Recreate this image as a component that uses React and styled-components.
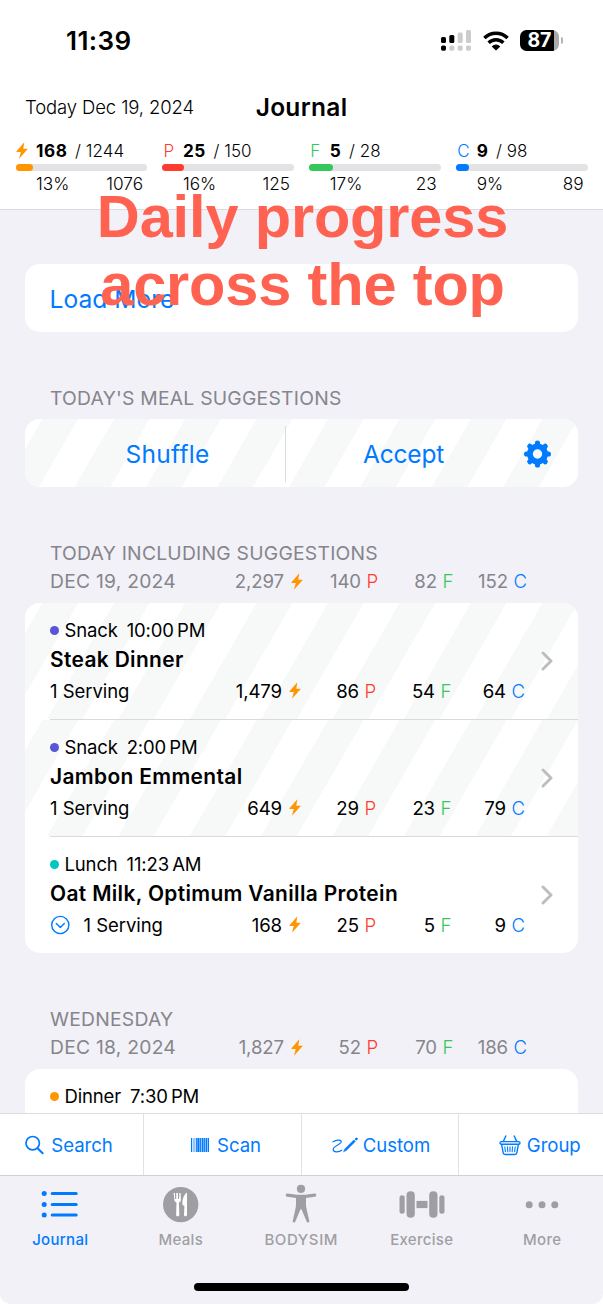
import React from "react";
import styled, { createGlobalStyle } from "styled-components";

const C = {
  blue: "#007aff",
  orange: "#ff9500",
  red: "#ff3b30",
  green: "#34c759",
  indigo: "#5856d6",
  teal: "#00c7be",
  grey: "#85858b",
  tab: "#9f9fa3",
  line: "#dcdce0",
  bg: "#f2f1f8",
};

const GlobalStyle = createGlobalStyle`
  * { box-sizing: border-box; }
  body {
    margin: 0;
    background: #fff;
    font-family: Inter, "Liberation Sans", sans-serif;
    color: #000;
  }
  svg { display: block; flex: none; }
`;

const Page = styled.div`
  position: relative;
  display: flex;
  flex-direction: column;
  width: 603px;
  height: 1304px;
  overflow: hidden;
  background: ${C.bg};
  border-radius: 0 0 10px 10px;
`;

/* ---------- header ---------- */

const Header = styled.header`
  flex: none;
  height: 210px;
  background: #fff;
  border-bottom: 1px solid ${C.line};
`;

const StatusBar = styled.div`
  display: flex;
  align-items: center;
  height: 81px;
  padding: 0 40px 0 66px;
`;

const Clock = styled.div`
  flex: 1;
  font-size: 26px;
  font-weight: 600;
  letter-spacing: 0.4px;
`;

const StatusIcons = styled.div`
  display: flex;
  align-items: center;
  gap: 11.5px;
`;

const Battery = styled.div`
  display: flex;
  align-items: center;
  gap: 2.5px;
  &::after {
    content: "";
    width: 2px;
    height: 7px;
    border-radius: 0 2px 2px 0;
    background: #b3b3b3;
  }
`;

const BatteryBody = styled.div`
  width: 38.5px;
  height: 21.5px;
  border-radius: 6.5px;
  background: linear-gradient(90deg, #000 87%, #aaa 87%);
  color: #fff;
  font-size: 19.5px;
  font-weight: 700;
  line-height: 21.5px;
  text-align: center;
  letter-spacing: -0.2px;
`;

const TitleRow = styled.div`
  display: grid;
  grid-template-columns: 1fr auto 1fr;
  align-items: center;
  height: 52px;
  padding: 0 25px;
`;

const Today = styled.div`
  font-size: 18.5px;
  font-weight: 300;
  letter-spacing: -0.12px;
`;

const Title = styled.h1`
  margin: 0;
  font-size: 24.5px;
  font-weight: 600;
  letter-spacing: 0.31px;
`;

const Stats = styled.div`
  display: grid;
  grid-template-columns: repeat(4, 131.5px);
  gap: 15.4px;
  padding: 5px 0 0 15.5px;
`;

const StatTop = styled.div`
  display: grid;
  grid-template-columns: 20.5px auto 1fr;
  align-items: center;
  height: 25px;
  margin-bottom: 1px;
  font-size: 17px;
`;

const StatUnit = styled.div`
  padding-left: ${(p) => (p.$icon ? 0.8 : 1)}px;
  color: ${(p) => p.$color};
  font-weight: 300;
`;

const StatValue = styled.b`
  font-size: 17.2px;
  font-weight: 700;
  letter-spacing: 0.55px;
`;

const StatGoal = styled.span`
  padding-left: 7.6px;
  font-weight: 300;
  letter-spacing: 0.05px;
`;

const Track = styled.div`
  height: 6.5px;
  border-radius: 4px;
  background: #e3e3e5;
`;

const Fill = styled.div`
  height: 100%;
  border-radius: 4px;
  background: ${(p) => p.$color};
`;

const StatBottom = styled.div`
  display: flex;
  align-items: center;
  justify-content: space-between;
  height: 26px;
  padding: 0 4px 0 20.5px;
  font-size: 17.2px;
  font-weight: 300;
`;

/* ---------- content ---------- */

const Main = styled.main`
  flex: none;
  height: 903px;
  padding: 54px 25px 0;
  overflow: hidden;
`;

const Card = styled.section`
  border-radius: 15px;
  background: #fff;
  overflow: hidden;
`;

const stripes = `repeating-linear-gradient(
  120deg,
  #f7f9f9 0,
  #f7f9f9 30.9px,
  #fff 30.9px,
  #fff 61.85px
)`;

const Striped = styled.div`
  position: relative;
  overflow: hidden;
  isolation: isolate;
  &::before {
    content: "";
    position: absolute;
    z-index: -1;
    inset: 0 0 0 -54.1px;
    display: ${(p) => (p.$on ? "block" : "none")};
    background: ${stripes};
  }
`;

const LoadMore = styled.div`
  height: 68px;
  padding-left: 24.5px;
  line-height: 70px;
  font-size: 24.6px;
  color: ${C.blue};
`;

const Suggest = styled(Striped)`
  display: flex;
  align-items: center;
  height: 68px;
  padding: 1px 26px 0 25px;
`;

const SuggestAction = styled.div`
  flex: 1;
  text-align: center;
  font-size: 24.5px;
  line-height: 34px;
  padding: 1px ${(p) => p.$inset || 0}px 0 0;
  letter-spacing: ${(p) => p.$spacing}px;
  color: ${C.blue};
`;

const VLine = styled.div`
  width: 1px;
  height: 56px;
  background: ${C.line};
`;

const SectionHeader = styled.div`
  padding: 51.5px 51px 6.5px 25px;
  line-height: 29px;
  font-size: 19.3px;
  letter-spacing: 0.24px;
  color: ${C.grey};
`;

const SectionTotals = styled.div`
  display: flex;
  justify-content: space-between;
  align-items: center;
  height: 29px;
  padding-bottom: 1px;
`;

const Row = styled(Striped)`
  display: flex;
  align-items: center;
  height: 116px;
  padding: 0 25px 0 25px;
`;

const RowBody = styled.div`
  width: 475px;
  margin-right: 16px;
  padding-top: 2px;
`;

const Divider = styled.div`
  height: 1px;
  background: linear-gradient(90deg, transparent 25px, #dadadd 25px);
`;

const When = styled.div`
  display: flex;
  align-items: center;
  height: 29px;
  padding-bottom: 1px;
  font-size: 18.5px;
  letter-spacing: -0.15px;
`;

const Dot = styled.i`
  width: 9.5px;
  height: 9.5px;
  margin: 1px 5.5px 0 -0.5px;
  border-radius: 50%;
  background: ${(p) => p.$color};
`;

const Time = styled.span`
  padding-left: 9px;
`;

const Name = styled.div`
  line-height: 30px;
  font-size: 20.9px;
  font-weight: 600;
  letter-spacing: 0.36px;
  white-space: nowrap;
`;

const Details = styled.div`
  display: flex;
  align-items: center;
  justify-content: space-between;
  height: 33px;
  padding-bottom: 1.5px;
`;

const Serving = styled.div`
  display: flex;
  align-items: center;
  gap: 13.5px;
  font-size: 18.5px;
  letter-spacing: -0.05px;
`;

const MetricRow = styled.div`
  display: grid;
  grid-template-columns: 77px 77px 76px 71px;
  font-size: 18.6px;
  letter-spacing: -0.1px;
`;

const Metric = styled.div`
  display: grid;
  grid-template-columns: 1fr 14px;
  column-gap: 5px;
  align-items: center;
  text-align: right;
`;

const Unit = styled.span`
  padding-left: ${(p) => (p.$icon ? 2 : 0.6)}px;
  text-align: left;
  font-weight: 300;
  color: ${(p) => p.$color};
`;

/* ---------- bottom bars ---------- */

const Toolbar = styled.nav`
  flex: none;
  display: grid;
  grid-template-columns: 151.5px 157.5px 157.5px 159px;
  height: 62px;
  margin-left: -7.5px;
  border-top: 1px solid ${C.line};
  background: #fff;
`;

const Tool = styled.div`
  display: flex;
  align-items: center;
  justify-content: center;
  gap: ${(p) => p.$gap}px;
  padding: 1px 0 0 ${(p) => p.$shift || 0}px;
  border-right: 1.5px solid #e2e1e8;
  font-size: 18.6px;
  letter-spacing: -0.05px;
  color: ${C.blue};
  &:last-child { border: 0; }
`;

const TabBar = styled.nav`
  flex: none;
  display: grid;
  grid-template-columns: repeat(5, 1fr);
  height: 108px;
  padding: 8px 0.5px 0 0;
  border-top: 1px solid #cfcfd4;
`;

const Tab = styled.div`
  display: flex;
  flex-direction: column;
  align-items: center;
  line-height: 30px;
  font-size: 15px;
  font-weight: 500;
  letter-spacing: ${(p) => p.$spacing || 0.3}px;
  color: ${(p) => (p.$active ? C.blue : C.tab)};
`;

const HomeIndicator = styled.div`
  width: 214.5px;
  height: 8px;
  margin: 0 auto;
  border-radius: 4px;
  background: #000;
`;

const Caption = styled.div`
  position: absolute;
  top: 182.5px;
  left: 0;
  width: 605px;
  text-align: center;
  font: 700 59.5px/68px "Liberation Sans", Arial, sans-serif;
  letter-spacing: -0.15px;
  color: #ff6250;
`;

/* ---------- icons ---------- */

const Bolt = () => (
  <svg width="12" height="17" viewBox="0 0 12 17">
    <path d="M8.3.2.5 9.3c-.2.3 0 .6.3.6h4L3 16.8l8.5-9.5c.3-.3.1-.6-.3-.6H7.3Z" fill={C.orange} />
  </svg>
);

const Signal = () => (
  <svg width="30" height="21" viewBox="0 0 30 21">
    {[
      [0, 7, 6, "#000", "#000"],
      [8.3, 5, 8, "#000", "#ccc"],
      [16.7, 2.5, 10.5, "#ccc", "#ccc"],
      [25, 0, 13, "#ccc", "#ccc"],
    ].map(([x, y, h, a, b]) => (
      <g key={x}>
        <rect x={x} y={y} width="5" height={h} rx="1.5" fill={a} />
        <rect x={x} y="15.5" width="5" height="5.3" rx="1.7" fill={b} />
      </g>
    ))}
  </svg>
);

const Wifi = () => (
  <svg width="26" height="20" viewBox="0 0 26 20">
    <g fill="none" stroke="#000" strokeWidth="3.5">
      <path d="M1.4 7.1a16.6 16.6 0 0 1 23.2 0" />
      <path d="M5.6 11.7a10.6 10.6 0 0 1 14.8 0" />
    </g>
    <path d="M13 19.6 8.7 15.4a6 6 0 0 1 8.6 0Z" fill="#000" />
  </svg>
);

const Gear = () => (
  <svg width="29" height="28" viewBox="-14 -14 28 28">
    <g stroke={C.blue} strokeWidth="5.2" strokeLinecap="round">
      {[0, 45, 90, 135].map((a) => (
        <path key={a} d="M0-10.9V-8M0 10.9V8" transform={`rotate(${a})`} />
      ))}
    </g>
    <circle r="7.6" fill="none" stroke={C.blue} strokeWidth="5.8" />
  </svg>
);

const Chevron = () => (
  <svg width="12" height="20" viewBox="0 0 12 20">
    <path d="m2 2 8 8-8 8" fill="none" stroke="#bdbdbf" strokeWidth="2.9" strokeLinecap="round" strokeLinejoin="round" />
  </svg>
);

const CircleChevron = () => (
  <svg width="20" height="20" viewBox="0 0 20 20">
    <g fill="none" stroke={C.blue} strokeWidth="1.4" strokeLinecap="round" strokeLinejoin="round">
      <circle cx="10.3" cy="10" r="8.6" />
      <path d="m6.3 8.5 4 4 4-4" />
    </g>
  </svg>
);

const SearchIcon = () => (
  <svg width="19" height="20" viewBox="0 0 19 20">
    <g fill="none" stroke={C.blue} strokeWidth="1.7" strokeLinecap="round">
      <circle cx="7.7" cy="8.2" r="6.7" />
      <path d="m12.6 13.2 5 5" strokeWidth="2" />
    </g>
  </svg>
);

const Barcode = () => (
  <svg width="18" height="14" viewBox="0 0 18 14">
    <g fill={C.blue}>
      {[[0, 1.2], [2.6, 0.8], [4.8, 1], [6.4, 2], [9.1, 1], [10.9, 1.5], [13.1, 1], [14.8, 1.2], [16.8, 1.2]].map(([x, w]) => (
        <rect key={x} x={x} width={w} height="14" />
      ))}
    </g>
    <rect x="4.8" width="13.2" height="14" fill={C.blue} opacity="0.3" />
  </svg>
);

const Scribble = () => (
  <svg width="26" height="19" viewBox="0 0 26 19">
    <path
      d="M1 5.8C4 3.8 9.2 3.2 9.2 5.6 9.2 8.8 1.2 9.8 1.2 13.4c0 3.3 5.7 2.8 8.6.9"
      fill="none" stroke={C.blue} strokeWidth="1.2" strokeLinecap="round"
    />
    <path d="m11.6 15.7 1.4-2.9L21.8 4l1.5 1.5-8.9 8.8Z" fill={C.blue} stroke={C.blue} strokeWidth=".6" strokeLinejoin="round" />
    <path d="m24.2 3.1.3-.3" stroke={C.blue} strokeWidth="2.6" strokeLinecap="round" />
  </svg>
);

const Basket = () => (
  <svg width="22" height="21" viewBox="0 0 22 21">
    <g fill="none" stroke={C.blue} strokeWidth="1.4" strokeLinecap="round" strokeLinejoin="round">
      <path d="M6.8 1 4.3 6.4M15.2 1l2.5 5.4" />
      <rect x="1" y="6.6" width="20" height="2.6" rx="1.3" />
      <path d="m2.6 9.4 1.5 8.2c.2 1.3.9 1.9 2.1 1.9h9.6c1.2 0 1.9-.6 2.1-1.9l1.5-8.2" />
      <path d="m5.8 11.8.6 4.8M8.5 11.8l.3 4.8M11 11.8v4.8M13.5 11.8l-.3 4.8M16.2 11.8l-.6 4.8" strokeWidth="1.1" />
    </g>
  </svg>
);

const ListIcon = () => (
  <svg width="38" height="41" viewBox="0 0 38 41">
    {[9.6, 20.4, 31].map((y) => (
      <g key={y}>
        <circle cx="3.2" cy={y} r="2.5" fill={C.blue} />
        <path d={`M11.2 ${y}H35.2`} stroke={C.blue} strokeWidth="3" strokeLinecap="round" />
      </g>
    ))}
  </svg>
);

const MealsIcon = () => (
  <svg width="36" height="41" viewBox="0 0 36 41">
    <circle cx="17.7" cy="20.6" r="17.7" fill={C.tab} />
    <path
      d="M10.6 9h1.3l.3 6h1l.1-6h1.7l.1 6h1l.3-6h1.2l.3 6.8c0 1.4-.8 2.2-2 2.6l.4 12.4c0 2-3.2 2-3.2 0l.4-12.4c-1.3-.4-2.2-1.2-2.1-2.6Z"
      fill="#fff"
    />
    <path d="M24 9.3v21.6c0 1.9-3 1.9-3 0l.4-8.9c-1.6-.9-2.1-1.7-2.1-3.1 0-4 1.9-8 4-10.1.4-.3.7-.1.7.5Z" fill="#fff" />
  </svg>
);

const BodyIcon = () => (
  <svg width="32" height="41" viewBox="0 0 32 41">
    <g fill={C.tab} stroke={C.tab} strokeLinecap="round" strokeLinejoin="round">
      <circle cx="16" cy="4.9" r="4.1" stroke="none" />
      <path d="M2.3 11.2 11.5 12.3h9l9.2-1.1" fill="none" strokeWidth="3.2" />
      <path d="M11.8 12h8.4v8.5c0 2.3.4 4.3 1 6.4l2.4 10.6-1 .2L17.2 25c-.4-.9-2-.9-2.4 0L9.4 37.7l-1-.2 2.4-10.6c.6-2.1 1-4.1 1-6.4Z" strokeWidth="1.6" />
    </g>
  </svg>
);

const Dumbbell = () => (
  <svg width="46" height="41" viewBox="0 0 46 41">
    <g fill={C.tab}>
      <rect x=".5" y="11.2" width="5.2" height="18.5" rx="2.5" />
      <rect x="7.5" y="7.2" width="8.3" height="26.5" rx="4" />
      <rect x="17.5" y="16.9" width="11" height="7.2" />
      <rect x="30.2" y="7.2" width="8.3" height="26.5" rx="4" />
      <rect x="40.3" y="11.2" width="5.2" height="18.5" rx="2.5" />
    </g>
  </svg>
);

const Dots = () => (
  <svg width="36" height="41" viewBox="0 0 36 41">
    {[5.2, 18, 30.8].map((x) => (
      <circle key={x} cx={x} cy="20.8" r="3.5" fill={C.tab} />
    ))}
  </svg>
);

/* ---------- data ---------- */

const stats = [
  { value: 168, goal: 1244, pct: "13%", left: 1076, color: C.orange, fill: 17 },
  { unit: "P", value: 25, goal: 150, pct: "16%", left: 125, color: C.red, fill: 22 },
  { unit: "F", value: 5, goal: 28, pct: "17%", left: 23, color: C.green, fill: 23.5 },
  { unit: "C", value: 9, goal: 98, pct: "9%", left: 89, color: C.blue, fill: 12.8 },
];

const meals = [
  { meal: "Snack", time: "10:00\u2009PM", color: C.indigo, name: "Steak Dinner", m: ["1,479", 86, 54, 64], suggested: true },
  { meal: "Snack", time: "2:00\u2009PM", color: C.indigo, name: "Jambon Emmental", m: ["649", 29, 23, 79], suggested: true },
  { meal: "Lunch", time: "11:23\u2009AM", color: C.teal, name: "Oat Milk, Optimum Vanilla Protein", m: ["168", 25, 5, 9] },
];

const units = [[<Bolt key="b" />, C.orange], ["P", C.red], ["F", C.green], ["C", C.blue]];

const Metrics = ({ values }) => (
  <MetricRow>
    {values.map((v, i) => (
      <Metric key={i}>
        <span>{v}</span>
        <Unit $icon={i === 0} $color={units[i][1]}>{units[i][0]}</Unit>
      </Metric>
    ))}
  </MetricRow>
);

const MealTime = ({ meal, time, color }) => (
  <When>
    <Dot $color={color} />
    <span>{meal}</span>
    <Time>{time}</Time>
  </When>
);

export default function App() {
  return (
    <Page>
      <GlobalStyle />
      <Header>
        <StatusBar>
          <Clock>11:39</Clock>
          <StatusIcons>
            <Signal />
            <Wifi />
            <Battery><BatteryBody>87</BatteryBody></Battery>
          </StatusIcons>
        </StatusBar>
        <TitleRow>
          <Today>Today Dec 19, 2024</Today>
          <Title>Journal</Title>
        </TitleRow>
        <Stats>
          {stats.map((s) => (
            <div key={s.goal}>
              <StatTop>
                <StatUnit $color={s.color} $icon={!s.unit}>{s.unit || <Bolt />}</StatUnit>
                <StatValue>{s.value}</StatValue>
                <StatGoal>/ {s.goal}</StatGoal>
              </StatTop>
              <Track><Fill $color={s.color} style={{ width: s.fill }} /></Track>
              <StatBottom><span>{s.pct}</span><span>{s.left}</span></StatBottom>
            </div>
          ))}
        </Stats>
      </Header>

      <Main>
        <Card><LoadMore>Load More</LoadMore></Card>

        <SectionHeader>TODAY'S MEAL SUGGESTIONS</SectionHeader>
        <Card>
          <Suggest $on>
            <SuggestAction $spacing={0.25}>Shuffle</SuggestAction>
            <VLine />
            <SuggestAction $spacing={-0.2} $inset={2}>Accept</SuggestAction>
            <Gear />
          </Suggest>
        </Card>

        <SectionHeader>
          TODAY INCLUDING SUGGESTIONS
          <SectionTotals>
            <span>DEC 19, 2024</span>
            <Metrics values={["2,297", 140, 82, 152]} />
          </SectionTotals>
        </SectionHeader>
        <Card>
          {meals.map((r, i) => (
            <React.Fragment key={r.name}>
              {i > 0 && <Divider />}
              <Row $on={r.suggested}>
                <RowBody>
                  <MealTime {...r} />
                  <Name>{r.name}</Name>
                  <Details>
                    <Serving>{!r.suggested && <CircleChevron />}1 Serving</Serving>
                    <Metrics values={r.m} />
                  </Details>
                </RowBody>
                <Chevron />
              </Row>
            </React.Fragment>
          ))}
        </Card>

        <SectionHeader>
          WEDNESDAY
          <SectionTotals>
            <span>DEC 18, 2024</span>
            <Metrics values={["1,827", 52, 70, 186]} />
          </SectionTotals>
        </SectionHeader>
        <Card>
          <Row>
            <RowBody>
              <MealTime meal="Dinner" time={"7:30\u2009PM"} color={C.orange} />
              <Name>&nbsp;</Name>
              <Details />
            </RowBody>
          </Row>
        </Card>
      </Main>

      <Toolbar>
        <Tool $gap={7.5} $shift={2}><SearchIcon />Search</Tool>
        <Tool $gap={8.5} $shift={7}><Barcode />Scan</Tool>
        <Tool $gap={4.5} $shift={3}><Scribble />Custom</Tool>
        <Tool $gap={6} $shift={2.5}><Basket />Group</Tool>
      </Toolbar>
      <TabBar>
        <Tab $active><ListIcon />Journal</Tab>
        <Tab><MealsIcon />Meals</Tab>
        <Tab $spacing={0.6}><BodyIcon />BODYSIM</Tab>
        <Tab><Dumbbell />Exercise</Tab>
        <Tab><Dots />More</Tab>
      </TabBar>
      <HomeIndicator />

      <Caption>Daily progress<br />across the top</Caption>
    </Page>
  );
}
